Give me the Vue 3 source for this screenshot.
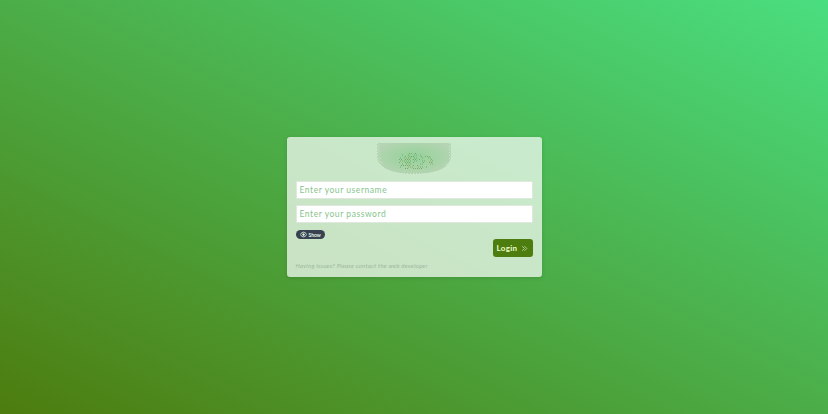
<script setup>
const dots = []
let seed = 7
const rnd = () => (seed = (seed * 16807) % 2147483647) / 2147483647
for (let y = 0; y < 14; y++) {
  for (let x = 0; x < 37; x++) {
    const px = 22 + x * 2 + (y % 2)
    const py = 10 + y * 1.5
    const d = ((px - 37) / 19) ** 2 + ((py - 18) / 8.5) ** 2
    if (d < 1 && rnd() < 0.55) dots.push({ x: px, y: py, c: rnd() < 0.3 ? '#8fa860' : '#6fae6a' })
  }
}
const edge = []
for (let y = 0; y < 33; y += 1.5) {
  for (let x = 0; x < 74; x += 1.5) {
    const d = ((x - 37) / 37) ** 4 + (y > 12 ? ((y - 12) / 21) ** 2 : 0)
    if (d > 0.72 && d < 1.15 && (Math.round(x / 1.5) + Math.round(y / 1.5)) % 2 === 0) edge.push({ x, y })
  }
}
</script>

<template>
  <main class="page">
    <form class="card" @submit.prevent>
      <div class="logo-row">
        <svg class="logo" width="74" height="33" viewBox="0 0 74 33" aria-label="logo">
          <defs>
            <radialGradient id="bowl" cx="50%" cy="45%" r="55%">
              <stop offset="0" stop-color="#93d09a" />
              <stop offset="0.45" stop-color="#a2d3a4" />
              <stop offset="1" stop-color="#b4d4b2" />
            </radialGradient>
          </defs>
          <path d="M0 0H74V13C74 24 60 31 37 31C14 31 0 24 0 13Z" fill="url(#bowl)" />
          <rect v-for="(p, i) in edge" :key="'e' + i" :x="p.x" :y="p.y" width="1" height="1" fill="#cde8cc" />
          <rect v-for="(p, i) in dots" :key="'d' + i" :x="p.x" :y="p.y" width="1" height="1" :fill="p.c" />
        </svg>
      </div>
      <input class="field" type="text" placeholder="Enter your username" />
      <input class="field" type="password" placeholder="Enter your password" />
      <div class="show-row">
        <button class="show" type="button">
          <svg width="7" height="7" viewBox="0 0 24 24" fill="none" stroke="#d9f0dc" stroke-width="3">
            <path d="M1 12s4-8 11-8 11 8 11 8-4 8-11 8S1 12 1 12Z" />
            <circle cx="12" cy="12" r="3" fill="#d9f0dc" />
          </svg>
          <span>Show</span>
        </button>
      </div>
      <div class="action-row">
        <button class="login" type="submit">
          <span>Login</span>
          <svg width="7" height="7" viewBox="0 0 24 24" fill="none" stroke="#b7d69a" stroke-width="3">
            <path d="M4 4l8 8-8 8M12 4l8 8-8 8" />
          </svg>
        </button>
      </div>
      <p class="note">Having issues? Please contact the web developer</p>
    </form>
  </main>
</template>

<style>
html, body { margin: 0; padding: 0; }
</style>

<style scoped>
.page {
  width: 828px;
  height: 414px;
  display: flex;
  align-items: center;
  justify-content: center;
  background: linear-gradient(to top right, #4d7c0f, #4ade80);
  font-family: "Lato", "Noto Sans", sans-serif;
}
.card {
  box-sizing: border-box;
  width: 255px;
  height: 140px;
  padding: 6px 9px 0;
  display: flex;
  flex-direction: column;
  background: rgba(255, 255, 255, 0.7);
  border-radius: 3px;
  box-shadow: 0 1px 4px rgba(0, 0, 0, 0.12);
}
.logo-row {
  display: flex;
  justify-content: center;
  height: 38px;
}
.logo { display: block; }
.field {
  box-sizing: border-box;
  display: block;
  width: 237px;
  height: 18px;
  margin: 0 0 6px;
  padding: 0 4px;
  border: 0;
  background: #fff;
  font: 8.5px "Lato", sans-serif;
  letter-spacing: 0.55px;
  color: #333;
  outline: 1px solid #dfe7df;
  outline-offset: -1px;
}
.field::placeholder { color: #86c48d; opacity: 1; }
.show-row { display: flex; margin-top: 1px; }
.show {
  display: flex;
  align-items: center;
  gap: 2px;
  height: 9px;
  width: 29px;
  padding: 0 3px 0 4px;
  border: 0;
  border-radius: 5px;
  background: #374151;
  color: #e3f3e3;
  font: 700 5px "Lato", sans-serif;
}
.action-row { display: flex; justify-content: flex-end; }
.login {
  display: flex;
  align-items: center;
  justify-content: center;
  gap: 4px;
  width: 40px;
  height: 18px;
  padding: 0;
  border: 0;
  border-radius: 3px;
  background: #4d7c0f;
  color: #ecfccb;
  font: 700 8px "Lato", sans-serif;
  letter-spacing: 0.3px;
}
.note {
  margin: 5px 0 0;
  font: italic 6px "Lato", sans-serif;
  letter-spacing: 0.25px;
  color: #9cb8a0;
}
</style>
